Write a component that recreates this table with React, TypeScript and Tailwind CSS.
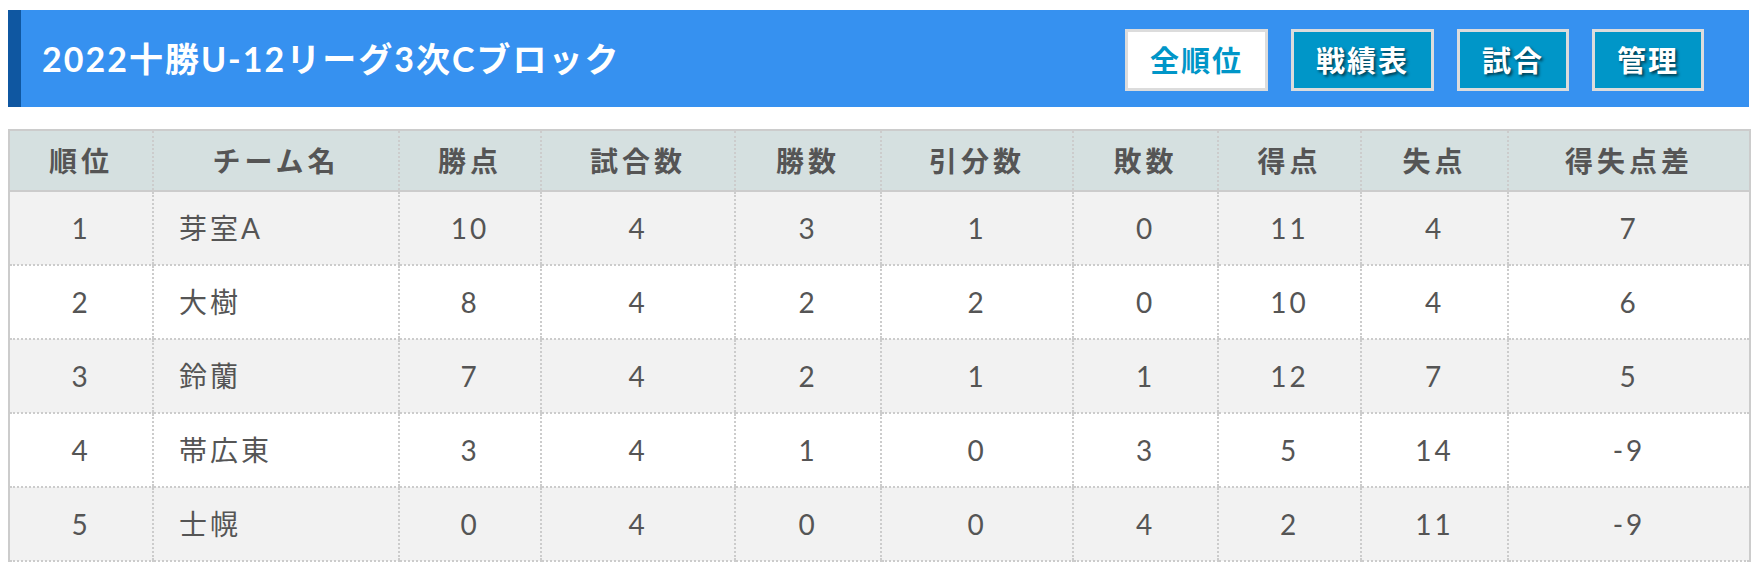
import React from "react";

const rows = [
  ["1", "芽室A", "10", "4", "3", "1", "0", "11", "4", "7"],
  ["2", "大樹", "8", "4", "2", "2", "0", "10", "4", "6"],
  ["3", "鈴蘭", "7", "4", "2", "1", "1", "12", "7", "5"],
  ["4", "帯広東", "3", "4", "1", "0", "3", "5", "14", "-9"],
  ["5", "士幌", "0", "4", "0", "0", "4", "2", "11", "-9"],
];

const heads = ["順位", "チーム名", "勝点", "試合数", "勝数", "引分数", "敗数", "得点", "失点", "得失点差"];
const widths = [144, 246, 142, 194, 146, 192, 145, 143, 147, 242];

export default function App() {
  return (
    <div
      className="px-2 pt-[10px] bg-white min-h-screen"
      style={{ fontFamily: 'Lato, "Noto Sans CJK JP", sans-serif' }}
    >
      <div className="h-[97px] bg-[#3691f0] border-l-[13px] border-[#0f57a1] flex items-center justify-between pl-[21px] pr-[45px]">
        <h1 className="text-white font-bold text-[34px] tracking-[2px] leading-none">
          2022十勝U-12リーグ3次Cブロック
        </h1>
        <div className="flex items-center gap-[23px] mt-[3px]">
          <button className="h-[62px] px-[22px] border-[3px] border-[#dcdcdc] bg-white text-[#0096c8] font-bold text-[29px] tracking-[2px] leading-none">
            全順位
          </button>
          {["戦績表", "試合", "管理"].map((t) => (
            <button
              key={t}
              className="h-[62px] px-[22px] border-[3px] border-[#dcdcdc] bg-[#0096c8] text-white font-bold text-[29px] tracking-[2px] leading-none [text-shadow:2px_2px_3px_rgba(0,0,0,0.6)]"
            >
              {t}
            </button>
          ))}
        </div>
      </div>

      <table className="mt-[22px] w-[1741px] table-fixed border-collapse border-2 border-solid border-[#cccccc] [border-bottom-style:dotted] text-[#555555]">
        <colgroup>
          {widths.map((w, i) => (
            <col key={i} style={{ width: w }} />
          ))}
        </colgroup>
        <thead>
          <tr className="h-[61px] bg-[#d5e0e0]">
            {heads.map((h, i) => (
              <th
                key={h}
                className={`font-bold text-[28px] tracking-[4px] text-center border-b-2 border-[#cccccc] border-dotted [border-bottom-style:solid] ${
                  i > 0 ? "border-l-2" : ""
                }`}
              >
                {h}
              </th>
            ))}
          </tr>
        </thead>
        <tbody>
          {rows.map((r, ri) => (
            <tr
              key={ri}
              className={`h-[74px] ${ri % 2 === 0 ? "bg-[#f2f2f2]" : "bg-white"}`}
            >
              {r.map((c, ci) => (
                <td
                  key={ci}
                  className={`text-[28px] tracking-[3px] font-normal border-t-2 border-b-2 border-dotted border-[#cccccc] ${
                    ci > 0 ? "border-l-2" : ""
                  } ${ci === 1 ? "text-left pl-[25px]" : "text-center"}`}
                >
                  {c}
                </td>
              ))}
            </tr>
          ))}
        </tbody>
      </table>
    </div>
  );
}
